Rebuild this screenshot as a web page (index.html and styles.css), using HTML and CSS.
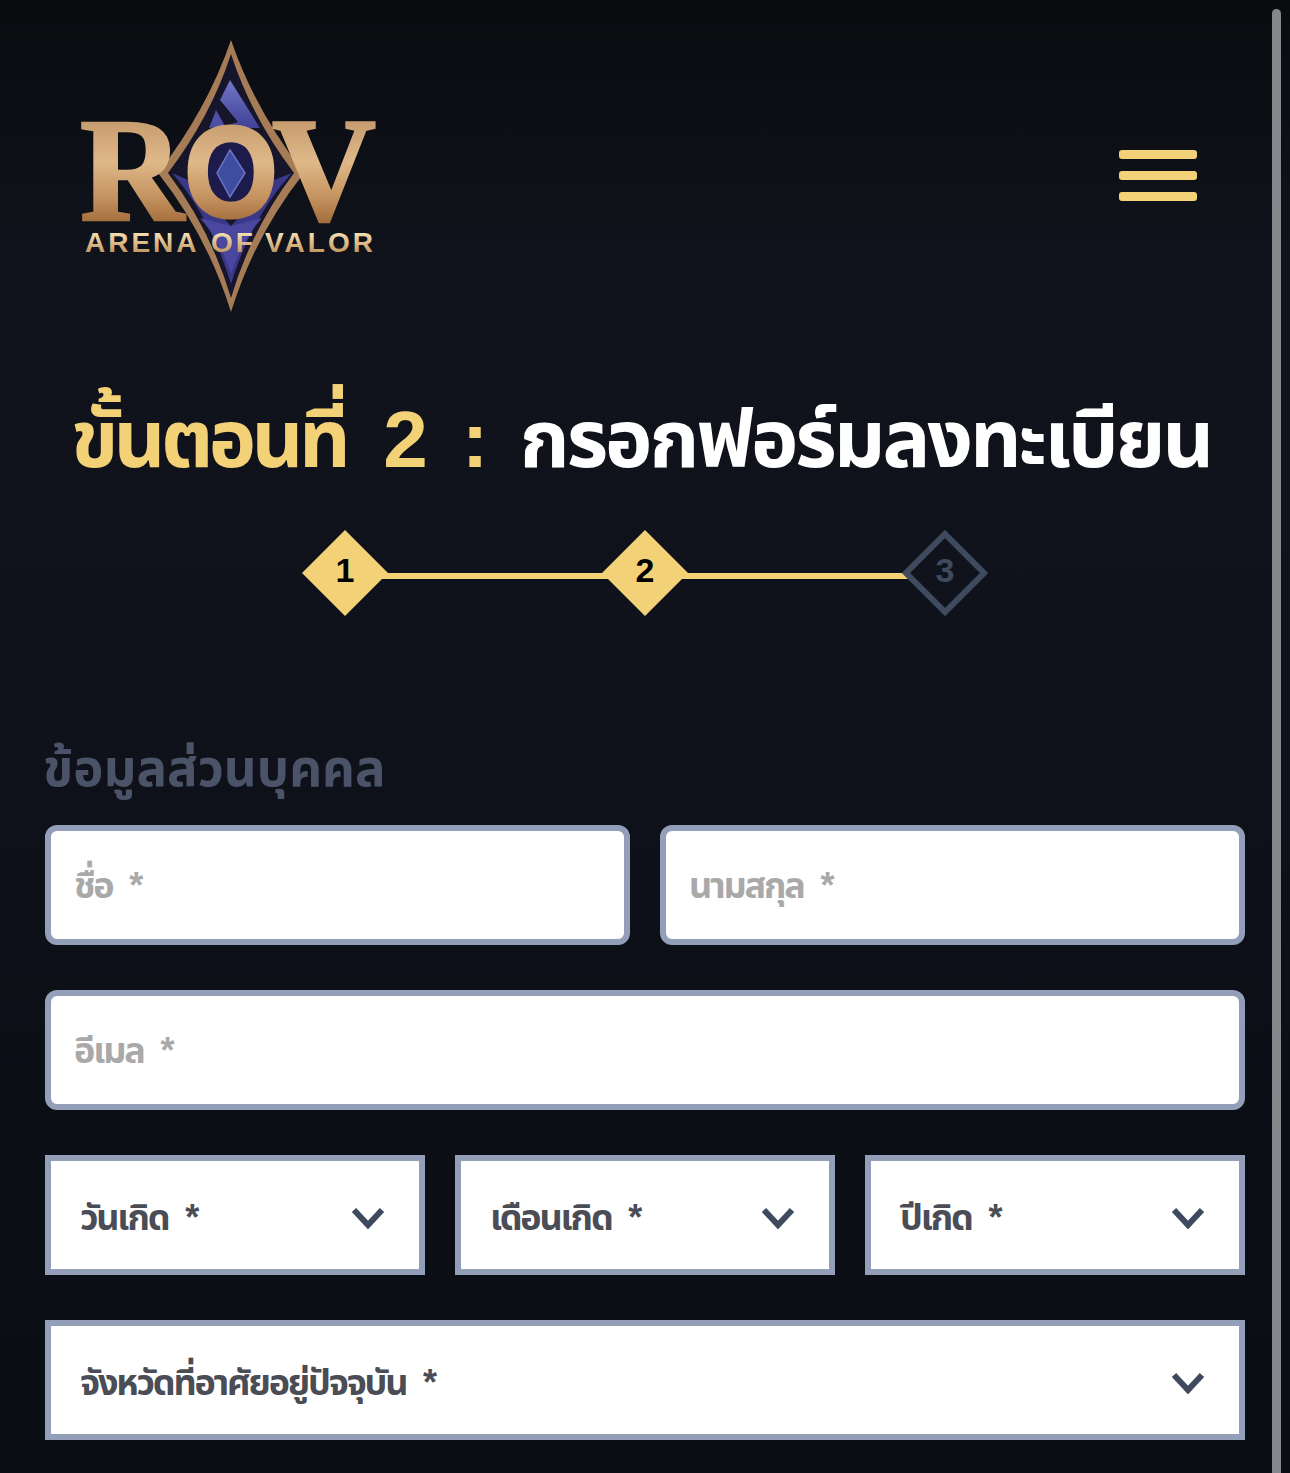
FILE: index.html
```html
<!DOCTYPE html>
<html lang="th">
<head>
  <meta charset="UTF-8" />
  <meta name="viewport" content="width=device-width, initial-scale=1.0"/>
  <title>ROV ลงทะเบียน</title>
  <link rel="stylesheet" href="styles.css">
</head>
<body>
  <div class="scrollbar"></div>

  <header class="header">
    <svg class="logo" width="340" height="290" viewBox="0 0 340 290">
      <defs>
        <linearGradient id="bronze" x1="0" y1="92" x2="0" y2="192" gradientUnits="userSpaceOnUse">
          <stop offset="0" stop-color="#c79d70"/>
          <stop offset="0.4" stop-color="#dfb888"/>
          <stop offset="0.75" stop-color="#c4935f"/>
          <stop offset="1" stop-color="#a56f3e"/>
        </linearGradient>
        <linearGradient id="gold" x1="0" y1="202" x2="0" y2="222" gradientUnits="userSpaceOnUse">
          <stop offset="0" stop-color="#f6e2b8"/>
          <stop offset="1" stop-color="#c69a62"/>
        </linearGradient>
        <linearGradient id="blue" x1="0" y1="50" x2="0" y2="100" gradientUnits="userSpaceOnUse">
          <stop offset="0" stop-color="#7176c8"/>
          <stop offset="1" stop-color="#3f3f94"/>
        </linearGradient>
      </defs>
      <path d="M171 10 Q147 80 98 143 Q147 205 171 282 Q195 205 244 143 Q195 80 171 10Z" fill="#a57c55"/>
      <path d="M171 24 Q151 86 108 143 Q151 200 171 268 Q191 200 234 143 Q191 86 171 24Z" fill="#17152a"/>
      <path d="M170 50 L200 98 L160 98 L178 92 L160 70Z" fill="url(#blue)"/>
      <path d="M156 80 L165 96 L149 98Z" fill="#4d4ea6"/>
      <path d="M112 143 Q150 186 171 254 Q192 186 232 143 L214 150 L171 196 L128 150Z" fill="#3b388a"/>
      <path d="M140 188 Q160 210 171 244 Q182 210 202 188 L171 196Z" fill="#4a479e"/>
      <ellipse cx="171" cy="141" rx="30" ry="32" fill="#1d1b4c"/>
      <path d="M170 120 L185 143 L170 167 L157 143Z" fill="#3f4da0" stroke="#6c72c4" stroke-width="1.5"/>
      <text class="logo-big" x="20" y="190" fill="url(#bronze)" stroke="url(#bronze)" stroke-width="2.5" textLength="104" lengthAdjust="spacingAndGlyphs">R</text>
      <text class="logo-big" x="212" y="190" fill="url(#bronze)" stroke="url(#bronze)" stroke-width="2.5" textLength="104" lengthAdjust="spacingAndGlyphs">V</text>
      <text class="logo-o" x="124" y="187" fill="url(#bronze)" stroke="url(#bronze)" stroke-width="3" textLength="94" lengthAdjust="spacingAndGlyphs">O</text>
      <text class="logo-small" x="25" y="222" fill="url(#gold)">ARENA</text>
      <text class="logo-small" x="151" y="222" fill="url(#gold)">OF</text>
      <text class="logo-small" x="205" y="222" fill="url(#gold)">VALOR</text>
    </svg>
    <button class="menu-btn" type="button" aria-label="menu">
      <span></span><span></span><span></span>
    </button>
  </header>

  <h1 class="title"><span class="title-step"><span class="title-word">ขั้นตอนที่</span> 2 :</span> กรอกฟอร์มลงทะเบียน</h1>

  <div class="stepper">
    <svg class="step" width="86" height="86" viewBox="0 0 86 86">
      <polygon points="43,0 86,43 43,86 0,43" fill="#f3d176"/>
      <text x="43" y="52" text-anchor="middle">1</text>
    </svg>
    <div class="step-line"></div>
    <svg class="step" width="86" height="86" viewBox="0 0 86 86">
      <polygon points="43,0 86,43 43,86 0,43" fill="#f3d176"/>
      <text x="43" y="52" text-anchor="middle">2</text>
    </svg>
    <div class="step-line"></div>
    <svg class="step step-off" width="86" height="86" viewBox="0 0 86 86">
      <polygon points="43,4 82,43 43,82 4,43" fill="#10131b" stroke="#3f4a5e" stroke-width="6"/>
      <text x="43" y="52" text-anchor="middle">3</text>
    </svg>
  </div>

  <form class="form">
    <h2 class="form-title">ข้อมูลส่วนบุคคล</h2>
    <div class="row row-2">
      <input class="field" type="text" placeholder="ชื่อ *">
      <input class="field" type="text" placeholder="นามสกุล *">
    </div>
    <div class="row">
      <input class="field" type="email" placeholder="อีเมล *">
    </div>
    <div class="row row-3">
      <div class="select">
        <span class="select-label">วันเกิด *</span>
        <svg class="chevron" width="34" height="22" viewBox="0 0 34 22"><path d="M3 3 L17 18 L31 3" /></svg>
      </div>
      <div class="select">
        <span class="select-label">เดือนเกิด *</span>
        <svg class="chevron" width="34" height="22" viewBox="0 0 34 22"><path d="M3 3 L17 18 L31 3" /></svg>
      </div>
      <div class="select">
        <span class="select-label">ปีเกิด *</span>
        <svg class="chevron" width="34" height="22" viewBox="0 0 34 22"><path d="M3 3 L17 18 L31 3" /></svg>
      </div>
    </div>
    <div class="row">
      <div class="select">
        <span class="select-label">จังหวัดที่อาศัยอยู่ปัจจุบัน *</span>
        <svg class="chevron" width="34" height="22" viewBox="0 0 34 22"><path d="M3 3 L17 18 L31 3" /></svg>
      </div>
    </div>
  </form>
</body>
</html>
```

FILE: styles.css
```css
:root {
  --gold: #f3d176;
  --muted: #4a5367;
  --border: #939fb8;
}
html, body {
  height: 1473px;
  overflow: hidden;
}
body {
  margin: 0;
  position: relative;
  font-family: "Liberation Sans", "Noto Sans Thai", "Noto Sans", sans-serif;
  background: linear-gradient(180deg, #090b0f 0, #10131b 260px, #0f121a 700px, #0b0e15 1150px, #0a0d14 100%);
}
.scrollbar {
  position: absolute;
  top: 9px;
  bottom: 0;
  right: 9px;
  width: 9px;
  border-radius: 5px 5px 0 0;
  background: #86878a;
}

/* Header */
.header {
  display: flex;
  justify-content: space-between;
  align-items: center;
  padding: 30px 93px 0 60px;
}
.logo { display: block; }
.logo-big {
  font-family: "Liberation Serif", serif;
  font-weight: bold;
  font-size: 148px;
}
.logo-o {
  font-family: "Liberation Sans", sans-serif;
  font-weight: bold;
  font-size: 130px;
}
.logo-small {
  font-family: "Liberation Sans", sans-serif;
  font-weight: bold;
  font-size: 28px;
  letter-spacing: 3px;
}
.menu-btn {
  display: flex;
  flex-direction: column;
  gap: 12px;
  width: 78px;
  padding: 0;
  border: none;
  background: none;
}
.menu-btn span {
  display: block;
  height: 9px;
  border-radius: 3px;
  background: var(--gold);
}

/* Title and steps */
.title {
  margin: 50px 0 0;
  padding-right: 8px;
  text-align: center;
  font-size: 80px;
  line-height: 140px;
  font-weight: bold;
  letter-spacing: -3px;
  word-spacing: 15px;
  color: #fff;
  white-space: nowrap;
}
.title-step { color: var(--gold); word-spacing: 18px; }
.title-word { letter-spacing: -4.5px; }
.stepper {
  display: flex;
  align-items: center;
  width: 686px;
  margin: 20px auto 0;
}
.step {
  position: relative;
  flex: none;
  z-index: 1;
}
.step text {
  font-family: "Liberation Sans", sans-serif;
  font-weight: bold;
  font-size: 34px;
  fill: #000;
}
.step-off text { fill: #3f4a5e; }
.step-line {
  flex: 1;
  height: 6px;
  margin: 6px -8px 0;
  background: var(--gold);
}

/* Form */
.form {
  display: flex;
  flex-direction: column;
  gap: 45px;
  margin: 0 45px;
}
.form-title {
  margin: 118px 0 -24px -2px;
  font-size: 51px;
  line-height: 70px;
  font-weight: bold;
  color: var(--muted);
}
.row { display: grid; gap: 30px; }
.row-2 { grid-template-columns: 1fr 1fr; }
.row-3 { grid-template-columns: 1fr 1fr 1fr; }
.field, .select {
  box-sizing: border-box;
  height: 120px;
  width: 100%;
  border: 6px solid var(--border);
  background: #fff;
  font-family: inherit;
  font-size: 36px;
  font-weight: bold;
  letter-spacing: -2.2px;
  word-spacing: 9px;
}
.field {
  padding: 2px 23px 0;
  border-radius: 12px;
  outline: none;
}
.field::placeholder { color: #a9a9a9; opacity: 1; }
.select {
  display: flex;
  justify-content: space-between;
  align-items: center;
  padding: 0 34px 0 29px;
  color: #4a4d55;
  white-space: nowrap;
}
.select-label { margin-top: 8px; }
.chevron { flex: none; margin-top: 6px; }
.chevron path {
  fill: none;
  stroke: #3f4a5e;
  stroke-width: 6;
}
```
